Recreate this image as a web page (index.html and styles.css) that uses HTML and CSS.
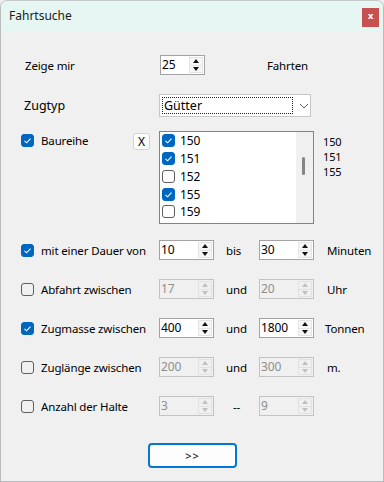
FILE: index.html
```html
<!DOCTYPE html>
<html lang="de">
<head>
<meta charset="utf-8">
<title>Fahrtsuche</title>
<link rel="stylesheet" href="styles.css">
</head>
<body>
<div class="window">
  <div class="titlebar">
    <span class="title">Fahrtsuche</span>
    <span class="close">x</span>
  </div>
  <div class="content">
    <div class="row row-zeige">
      <span class="plain-label zeige">Zeige mir</span>
      <div class="spin spin-small"><span class="val">25</span><span class="arrows"><span class="arr"><i class="up"></i></span><span class="arr"><i class="down"></i></span></span></div>
      <span class="fahrten">Fahrten</span>
    </div>

    <div class="row row-zugtyp">
      <span class="plain-label zugtyp">Zugtyp</span>
      <div class="combo">
        <span class="combo-focus">Gütter</span>
        <svg class="chev" width="10" height="6" viewBox="0 0 10 6"><polyline points="1,1 5,5 9,1" fill="none" stroke="#5c5c5c" stroke-width="1"/></svg>
      </div>
    </div>

    <div class="row row-baureihe">
      <div class="check-label baureihe-label">
        <span class="cb on"><svg width="13" height="13" viewBox="0 0 13 13"><polyline points="3.5,6.8 5.6,8.8 9.5,4.6" fill="none" stroke="#fff" stroke-width="1.1"/></svg></span>
        <span>Baureihe</span>
      </div>
      <span class="xbtn">X</span>
      <div class="listbox">
        <div class="items">
          <div class="item"><span class="cb on"><svg width="13" height="13" viewBox="0 0 13 13"><polyline points="3.5,6.8 5.6,8.8 9.5,4.6" fill="none" stroke="#fff" stroke-width="1.1"/></svg></span><span>150</span></div>
          <div class="item"><span class="cb on"><svg width="13" height="13" viewBox="0 0 13 13"><polyline points="3.5,6.8 5.6,8.8 9.5,4.6" fill="none" stroke="#fff" stroke-width="1.1"/></svg></span><span>151</span></div>
          <div class="item"><span class="cb"></span><span>152</span></div>
          <div class="item"><span class="cb on"><svg width="13" height="13" viewBox="0 0 13 13"><polyline points="3.5,6.8 5.6,8.8 9.5,4.6" fill="none" stroke="#fff" stroke-width="1.1"/></svg></span><span>155</span></div>
          <div class="item"><span class="cb"></span><span>159</span></div>
        </div>
        <div class="scrollbar"><span class="thumb"></span></div>
      </div>
      <div class="selected-list">
        <span>150</span>
        <span>151</span>
        <span>155</span>
      </div>
    </div>

    <div class="row row-first">
      <div class="check-label"><span class="cb on"><svg width="13" height="13" viewBox="0 0 13 13"><polyline points="3.5,6.8 5.6,8.8 9.5,4.6" fill="none" stroke="#fff" stroke-width="1.1"/></svg></span><span>mit einer Dauer von</span></div>
      <div class="spin"><span class="val">10</span><span class="arrows"><span class="arr"><i class="up"></i></span><span class="arr"><i class="down"></i></span></span></div>
      <span class="conj">bis</span>
      <div class="spin"><span class="val">30</span><span class="arrows"><span class="arr"><i class="up"></i></span><span class="arr"><i class="down"></i></span></span></div>
      <span class="unit">Minuten</span>
    </div>

    <div class="row">
      <div class="check-label"><span class="cb"></span><span>Abfahrt zwischen</span></div>
      <div class="spin disabled"><span class="val">17</span><span class="arrows"><span class="arr"><i class="up"></i></span><span class="arr"><i class="down"></i></span></span></div>
      <span class="conj">und</span>
      <div class="spin disabled"><span class="val">20</span><span class="arrows"><span class="arr"><i class="up"></i></span><span class="arr"><i class="down"></i></span></span></div>
      <span class="unit">Uhr</span>
    </div>

    <div class="row">
      <div class="check-label"><span class="cb on"><svg width="13" height="13" viewBox="0 0 13 13"><polyline points="3.5,6.8 5.6,8.8 9.5,4.6" fill="none" stroke="#fff" stroke-width="1.1"/></svg></span><span>Zugmasse zwischen</span></div>
      <div class="spin"><span class="val">400</span><span class="arrows"><span class="arr"><i class="up"></i></span><span class="arr"><i class="down"></i></span></span></div>
      <span class="conj">und</span>
      <div class="spin"><span class="val">1800</span><span class="arrows"><span class="arr"><i class="up"></i></span><span class="arr"><i class="down"></i></span></span></div>
      <span class="unit unit-tonnen">Tonnen</span>
    </div>

    <div class="row">
      <div class="check-label"><span class="cb"></span><span>Zuglänge zwischen</span></div>
      <div class="spin disabled"><span class="val">200</span><span class="arrows"><span class="arr"><i class="up"></i></span><span class="arr"><i class="down"></i></span></span></div>
      <span class="conj">und</span>
      <div class="spin disabled"><span class="val">300</span><span class="arrows"><span class="arr"><i class="up"></i></span><span class="arr"><i class="down"></i></span></span></div>
      <span class="unit">m.</span>
    </div>

    <div class="row">
      <div class="check-label"><span class="cb"></span><span>Anzahl der Halte</span></div>
      <div class="spin disabled"><span class="val">3</span><span class="arrows"><span class="arr"><i class="up"></i></span><span class="arr"><i class="down"></i></span></span></div>
      <span class="conj conj-dash">--</span>
      <div class="spin disabled"><span class="val">9</span><span class="arrows"><span class="arr"><i class="up"></i></span><span class="arr"><i class="down"></i></span></span></div>
    </div>

    <div class="button-row">
      <span class="go">&gt;&gt;</span>
    </div>
  </div>
</div>
</body>
</html>
```

FILE: styles.css
```css
* { box-sizing: border-box; }

html, body {
  margin: 0;
  padding: 0;
  background: #f0f0f0;
}

body {
  font-family: "Noto Sans", "Open Sans", "Liberation Sans", sans-serif;
  font-size: 11.5px;
  letter-spacing: -0.15px;
  color: #000;
}

.window {
  width: 384px;
  height: 482px;
  border: 1px solid #b8bcbc;
  border-top-color: #c4c8c8;
  border-radius: 7px 7px 0 0;
  background: #f0f0f0;
  overflow: hidden;
  display: flex;
  flex-direction: column;
}

.titlebar {
  height: 30px;
  flex: none;
  background: #e6f6f2;
  display: flex;
  align-items: flex-start;
  padding-left: 8px;
}

.title {
  font-size: 12px;
  letter-spacing: 0;
  line-height: 30px;
  color: #1a1a1a;
  flex: 1;
}

.close {
  width: 17px;
  height: 19px;
  margin-top: 7px;
  margin-right: 4px;
  background: #c75050;
  color: #fff;
  font-family: "DejaVu Sans", sans-serif;
  font-weight: bold;
  font-size: 9px;
  line-height: 17px;
  text-align: center;
}

.content {
  display: flex;
  flex-direction: column;
  padding-left: 20px;
}

.row {
  display: flex;
  align-items: center;
  height: 20px;
  margin-top: 19px;
}

.row-zeige { margin-top: 24px; }

.plain-label { display: block; }

.zeige {
  width: 139px;
  padding-left: 4px;
}

.spin {
  width: 55px;
  height: 20px;
  border: 1px solid #a3a3a3;
  background: #fff;
  display: flex;
  align-items: stretch;
}

.spin-small { width: 45px; }

.spin .val {
  flex: 1;
  padding-left: 1px;
  line-height: 17px;
  font-size: 12px;
}

.arrows {
  width: 15px;
  display: flex;
  flex-direction: column;
  padding: 1px 1px 1px 0;
}

.arr {
  flex: 1;
  display: flex;
  align-items: center;
  justify-content: center;
  border: 1px solid #e4e4e4;
  background: #f6f6f6;
}

.arr + .arr { border-top: none; }

.up, .down {
  width: 0;
  height: 0;
  border-left: 3.5px solid transparent;
  border-right: 3.5px solid transparent;
}

.up { border-bottom: 4px solid #111; }
.down { border-top: 4px solid #111; }

.spin.disabled {
  background: #f0f0f0;
  border-color: #c3c3c3;
  color: #8e8e8e;
}

.spin.disabled .arr {
  background: #f0f0f0;
  border-color: #e2e2e2;
}

.spin.disabled .up { border-bottom-color: #c0c0c0; }
.spin.disabled .down { border-top-color: #c0c0c0; }

.fahrten { margin-left: 62px; }

.row-zugtyp {
  height: 23px;
  margin-top: 19px;
}

.zugtyp {
  width: 138px;
  padding-left: 3px;
  font-size: 12.5px;
  letter-spacing: 0;
}

.combo {
  width: 152px;
  height: 23px;
  border: 1px solid #c6c6c6;
  background: #fff;
  display: flex;
  align-items: center;
  padding: 1px 0 1px 2px;
}

.combo-focus {
  width: 131px;
  height: 17px;
  border: 1px dotted #222;
  font-size: 12.5px;
  letter-spacing: 0;
  line-height: 15px;
  padding-left: 1px;
}

.chev { margin-left: 6px; }

.row-baureihe {
  height: auto;
  align-items: flex-start;
  margin-top: 14px;
}

.check-label {
  width: 138px;
  display: flex;
  align-items: center;
  gap: 7px;
  flex: none;
}

.baureihe-label {
  width: 112px;
  margin-top: 2px;
}

.cb {
  width: 13px;
  height: 13px;
  flex: none;
  border: 1px solid #5f5f5f;
  border-radius: 3px;
  display: block;
}

.cb.on {
  background: #0067c0;
  border-color: #0067c0;
}

.cb svg {
  display: block;
  margin: -1px 0 0 -1px;
}

.xbtn {
  width: 17px;
  height: 17px;
  margin-top: 2px;
  border: 1px solid #d3d3d3;
  border-radius: 3px;
  background: #fdfdfd;
  text-align: center;
  line-height: 15px;
  font-size: 12px;
  margin-right: 9px;
  flex: none;
}

.listbox {
  width: 155px;
  height: 93px;
  border: 1px solid #828282;
  background: #fff;
  display: flex;
  flex: none;
}

.items {
  flex: 1;
  padding-left: 2px;
}

.item {
  height: 17.75px;
  display: flex;
  align-items: center;
  gap: 5px;
  font-size: 12px;
}

.scrollbar {
  width: 17px;
  background: #f0f0f0;
  position: relative;
}

.thumb {
  position: absolute;
  left: 6px;
  top: 25px;
  width: 3px;
  height: 18px;
  border-radius: 2px;
  background: #858585;
}

.selected-list {
  margin-left: 9px;
  margin-top: 3px;
  display: flex;
  flex-direction: column;
  line-height: 15px;
  font-size: 11px;
}

.row-first { margin-top: 16px; }

.conj {
  width: 45px;
  padding-left: 12px;
}

.conj-dash { padding-left: 19px; }

.unit { margin-left: 13px; }
.unit-tonnen { margin-left: 11px; }

.button-row {
  margin-top: 27px;
  padding-left: 127px;
}

.go {
  display: block;
  width: 89px;
  height: 25px;
  border: 2px solid #0078d4;
  border-radius: 4px;
  background: #fdfdfd;
  text-align: center;
  line-height: 21px;
  font-size: 11px;
  letter-spacing: 1px;
}
```
